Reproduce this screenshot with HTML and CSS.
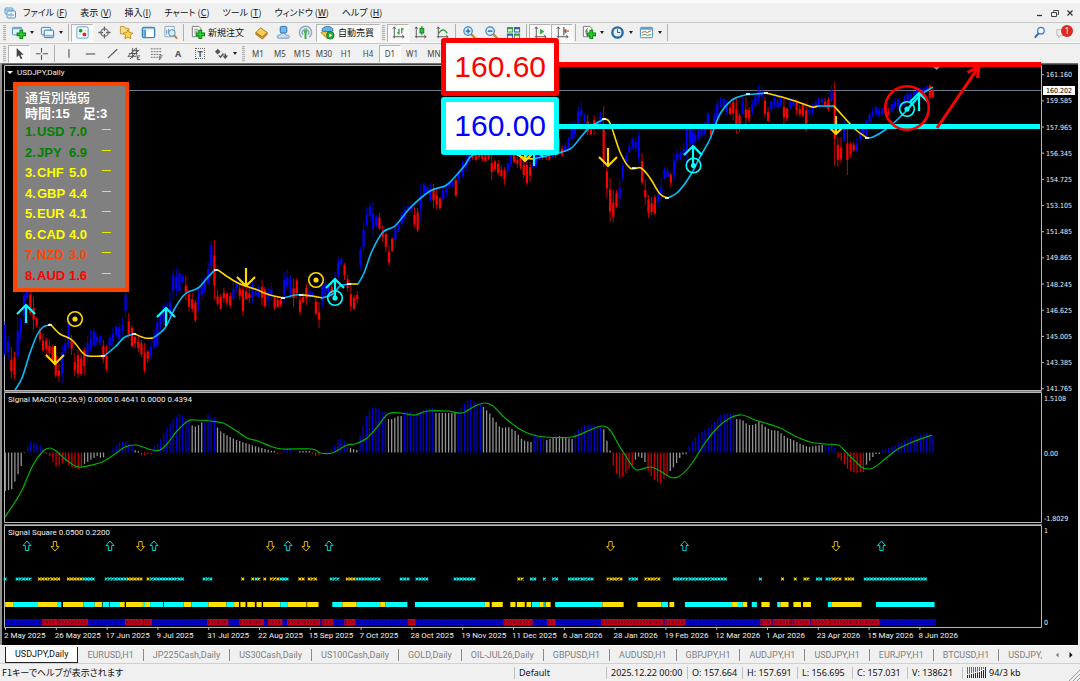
FILE: index.html
```html
<!DOCTYPE html>
<html lang="ja">
<head>
<meta charset="utf-8">
<title>USDJPY,Daily</title>
<link rel="stylesheet" href="styles.css">
</head>
<body>
<div class="app">
  <header class="menubar">
    <svg class="app-icon" viewBox="0 0 12 12" aria-hidden="true"><rect x="1" y="1" width="8" height="6" rx="1" fill="#dff0fb" stroke="#5a9fd0"/><path d="M1 3h8" stroke="#5a9fd0"/><rect x="3" y="4" width="8.500" height="7" rx="1" fill="#f4fbff" stroke="#4a94cc"/><path d="M5 9V7m2 2.500V6m2 3V7" stroke="#3c86c4"/></svg>
    <nav class="menu">
      <a href="#">ファイル (<u>F</u>)</a>
      <a href="#">表示 (<u>V</u>)</a>
      <a href="#">挿入(<u>I</u>)</a>
      <a href="#">チャート (<u>C</u>)</a>
      <a href="#">ツール (<u>T</u>)</a>
      <a href="#">ウィンドウ (<u>W</u>)</a>
      <a href="#">ヘルプ (<u>H</u>)</a>
    </nav>
    <div class="window-controls">
      <button type="button" aria-label="最小化"><svg viewBox="0 0 8 8"><path d="M1 6.500h5" stroke="#333" stroke-width="1.300"/></svg></button>
      <button type="button" aria-label="元に戻す"><svg viewBox="0 0 8 8"><path d="M2.500 2.500v-1h5v4h-1M.5 3.500h5v4h-5z" fill="none" stroke="#444"/></svg></button>
      <button type="button" aria-label="閉じる"><svg viewBox="0 0 8 8"><path d="M1.500 1.500l5 5m0-5l-5 5" stroke="#333" stroke-width="1.200"/></svg></button>
    </div>
  </header>

  <div class="toolbar standard">
    <span class="grip"></span>
    <button type="button" class="tool drop" aria-label="新規チャート"><svg viewBox="0 0 16 16"><rect x="1.500" y="2.500" width="10" height="8" rx="1" fill="#e4f2fb" stroke="#4c8fc0"/><path d="M2 4h9" stroke="#4c8fc0"/><path d="M11 5v10M6 10h10" stroke="#0b7a10" stroke-width="4"/><path d="M11 6v8M7 10h8" stroke="#25d02a" stroke-width="2"/></svg></button>
    <button type="button" class="tool drop" aria-label="表示設定"><svg viewBox="0 0 16 16"><rect x="1.500" y="2.500" width="10" height="8" rx="1" fill="#e4f2fb" stroke="#3c7fb5"/><rect x="4.500" y="5.500" width="10" height="8" rx="1" fill="#f2f9fe" stroke="#2c6fa8"/><path d="M5 11.500h9" stroke="#7fb8dc" stroke-width="2"/></svg></button>
    <span class="sep"></span>
    <button type="button" class="tool pressed" aria-label="気配値表示"><svg viewBox="0 0 16 16"><rect x="2" y="2" width="12" height="12" rx="1.500" fill="#fff" stroke="#4e9bd2"/><circle cx="6" cy="6" r="2" fill="#1a9a28"/><circle cx="10" cy="10" r="2" fill="#e02020"/><path d="M4 10h2m4-4h2" stroke="#b8cce0"/></svg></button>
    <button type="button" class="tool" aria-label="データウィンドウ"><svg viewBox="0 0 16 16"><circle cx="8" cy="8" r="4" fill="none" stroke="#666" stroke-width="1.200"/><path d="M8 1.500v5m0 3v5M1.500 8h5m3 0h5" stroke="#666" stroke-width="1.400"/></svg></button>
    <button type="button" class="tool" aria-label="ナビゲーター"><svg viewBox="0 0 16 16"><path d="M1.500 3.500v-2h4l1 2h4v6h-9z" fill="#f8dc86" stroke="#bd963c"/><path d="M9.500 5l1.600 3.200 3.700.4-2.700 2.500.7 3.500-3.300-1.700-3.200 1.700.7-3.500-2.600-2.500 3.600-.4z" fill="#ffd64b" stroke="#c28a1c"/></svg></button>
    <button type="button" class="tool" aria-label="ターミナル"><svg viewBox="0 0 16 16"><rect x="1.500" y="2.500" width="13" height="11" rx="1.500" fill="#fff" stroke="#3a87c2" stroke-width="1.500"/><path d="M2 4h12" stroke="#6aabd8" stroke-width="1"/><path d="M4 5v8" stroke="#5ea2d2" stroke-width="3"/></svg></button>
    <button type="button" class="tool" aria-label="ストラテジーテスター"><svg viewBox="0 0 16 16"><path d="M2 1.500h10v11H2z" fill="#eef5fa" stroke="#8aa9c0"/><path d="M4 10V5m2 4V4m2 6V6" stroke="#5a8db4"/><circle cx="9.500" cy="8.500" r="3.500" fill="#d4ecfa" stroke="#5589ad"/><path d="M12 11l3 3.500" stroke="#b8862c" stroke-width="2"/></svg></button>
    <span class="sep"></span>
    <button type="button" class="tool text"><svg viewBox="0 0 16 16"><path d="M2.500 1.500h7l2 2v9h-9z" fill="#fff" stroke="#777"/><path d="M4.500 4.500h4m-4 2h5m-5 2h3" stroke="#888"/><path d="M11 5v10M6 10h10" stroke="#0b7a10" stroke-width="4"/><path d="M11 6v8M7 10h8" stroke="#25d02a" stroke-width="2"/></svg>新規注文</button>
    <button type="button" class="tool" aria-label="メタエディター"><svg viewBox="0 0 16 16"><path d="M2 8l5-5 7 5-5 5z" fill="#f7cf54" stroke="#a8761a"/><path d="M2 8v2l7 5 5-5V8l-5 5z" fill="#d89b26" stroke="#a8761a"/></svg></button>
    <button type="button" class="tool" aria-label="コミュニティ"><svg viewBox="0 0 16 16"><rect x="4.500" y="1.500" width="7" height="7" rx="1.500" fill="#6fb8f0" stroke="#2268b0"/><path d="M3 14c-3 0-2-4 1-3 1-3 6-3 7 0 4-1 4 3 2 3z" fill="#c9dff0" stroke="#6a90b4"/></svg></button>
    <button type="button" class="tool" aria-label="シグナル"><svg viewBox="0 0 16 16"><path d="M4 13a6.500 6.500 0 1 1 8 0M5.500 10.500a3.500 3.500 0 1 1 5 0" fill="none" stroke="#8cabc0" stroke-width="1.500"/><path d="M8 7v8" stroke="#35a845" stroke-width="2"/><circle cx="8" cy="7" r="2" fill="#48b557"/></svg></button>
    <button type="button" class="tool text pressed"><svg viewBox="0 0 16 16"><path d="M1 8l7-3 6 4-6 6z" fill="#f0c243" stroke="#b58722"/><path d="M2 6c0-6 12-6 12 0l-2 1H4z" fill="#65b3e4" stroke="#2f78ac"/><circle cx="11" cy="11" r="4" fill="#28ae35" stroke="#117a1e"/><path d="M10 9l3 2-3 2z" fill="#fff"/></svg>自動売買</button>
    <span class="grip"></span>
    <button type="button" class="tool pressed" aria-label="バーチャート"><svg viewBox="0 0 16 16"><path d="M3.500 2v12M2 12.500h12M2 4l1.500-2L5 4m7 7l2 1.500-2 1.500" fill="none" stroke="#555"/><path d="M8.500 4v6M11.500 3v6M8.500 8.500h-2M11.500 4.500h2" stroke="#1c9a2d" stroke-width="1.300"/></svg></button>
    <button type="button" class="tool" aria-label="ローソク足"><svg viewBox="0 0 16 16"><path d="M3.500 2v12M2 12.500h12M2 4l1.500-2L5 4m7 7l2 1.500-2 1.500" fill="none" stroke="#555"/><path d="M9.500 1v10" stroke="#117a1e"/><rect x="7.500" y="3.500" width="4" height="5" fill="#28c438" stroke="#117a1e"/></svg></button>
    <button type="button" class="tool" aria-label="ラインチャート"><svg viewBox="0 0 16 16"><path d="M3.500 2v12M2 12.500h12M2 4l1.500-2L5 4m7 7l2 1.500-2 1.500" fill="none" stroke="#555"/><path d="M4 9c3-5 6-5 9 0" fill="none" stroke="#1c9a2d" stroke-width="1.300"/></svg></button>
    <span class="sep"></span>
    <button type="button" class="tool" aria-label="ズームイン"><svg viewBox="0 0 16 16"><path d="M9 9l5.500 5.500" stroke="#c3922f" stroke-width="2.500"/><circle cx="6.500" cy="6.500" r="4.500" fill="#d7edfb" stroke="#3c84c0" stroke-width="1.300"/><path d="M6.500 4v5M4 6.500h5" stroke="#2568a8" stroke-width="1.500"/></svg></button>
    <button type="button" class="tool" aria-label="ズームアウト"><svg viewBox="0 0 16 16"><path d="M9 9l5.500 5.500" stroke="#c3922f" stroke-width="2.500"/><circle cx="6.500" cy="6.500" r="4.500" fill="#d7edfb" stroke="#3c84c0" stroke-width="1.300"/><path d="M4 6.500h5" stroke="#2568a8" stroke-width="1.500"/></svg></button>
    <button type="button" class="tool" aria-label="チャートの整列"><svg viewBox="0 0 16 16"><path d="M1 2h6.500v6H1zM8.500 9H15v6H8.500z" fill="#3f9d3a"/><path d="M8.500 2H15v6H8.500zM1 9h6.500v6H1z" fill="#2d62b8"/><path d="M2 4.500h4.500V7H2zM9.500 4.500H14V7H9.500zM2 11.500h4.500V14H2zM9.500 11.500H14V14H9.500z" fill="#e0eee4"/></svg></button>
    <span class="sep"></span>
    <button type="button" class="tool pressed" aria-label="自動スクロール"><svg viewBox="0 0 16 16"><path d="M3.500 2v12M2 12.500h12M2 4l1.500-2L5 4m7 7l2 1.500-2 1.500" fill="none" stroke="#555"/><path d="M7.500 4l4.500 3-4.500 3z" fill="#28ae35"/></svg></button>
    <button type="button" class="tool pressed" aria-label="チャートシフト"><svg viewBox="0 0 16 16"><path d="M3.500 2v12M2 12.500h12M2 4l1.500-2L5 4m7 7l2 1.500-2 1.500" fill="none" stroke="#555"/><path d="M9.500 2v9" stroke="#2c68a0" stroke-width="1.300"/><path d="M10 6.500h5M12 4.500L10 6.500l2 2" fill="none" stroke="#c25a20" stroke-width="1.300"/></svg></button>
    <span class="sep"></span>
    <button type="button" class="tool drop" aria-label="インディケータ"><svg viewBox="0 0 16 16"><path d="M2.500 1.500h7l2 2v9h-9z" fill="#fff" stroke="#777"/><path d="M7.500 4c-2 0-2 1-2 6m-1-3.500h3" fill="none" stroke="#555"/><path d="M11 5v10M6 10h10" stroke="#0b7a10" stroke-width="4"/><path d="M11 6v8M7 10h8" stroke="#25d02a" stroke-width="2"/></svg></button>
    <button type="button" class="tool drop" aria-label="時間足設定"><svg viewBox="0 0 16 16"><circle cx="8" cy="8" r="5.500" fill="#e4f2fb" stroke="#2868ac" stroke-width="2.500"/><path d="M8 4.500V8h3" fill="none" stroke="#444"/></svg></button>
    <button type="button" class="tool drop" aria-label="定型チャート"><svg viewBox="0 0 16 16"><rect x="1.500" y="2.500" width="13" height="11" rx="1" fill="#fff" stroke="#4384b8"/><path d="M2 4h12" stroke="#5a9cd0" stroke-width="2"/><path d="M3 8l3-1 3 1 4-2" fill="none" stroke="#a34d3c"/><path d="M3 11l3-1 3 1 4-1" fill="none" stroke="#3a9444"/></svg></button>
    <span class="sep"></span>
    <div class="right">
      <button type="button" class="tool" aria-label="検索"><svg viewBox="0 0 16 16"><path d="M7 9l-4 4.500" stroke="#2a63b8" stroke-width="2"/><circle cx="9.500" cy="6" r="3.500" fill="#f4faff" stroke="#2f78d0" stroke-width="1.300"/></svg></button>
      <button type="button" class="tool chat" aria-label="メッセージ"><svg viewBox="0 0 16 16"><path d="M3 5h9v6H7l-2 3v-3H3z" fill="#eee" stroke="#bbb"/></svg><span class="badge">1</span></button>
    </div>
  </div>

  <div class="toolbar line-studies">
    <span class="grip"></span>
    <button type="button" class="tool pressed" aria-label="カーソル"><svg viewBox="0 0 16 16"><path d="M5 2v10l2.500-2.200L9.300 14l1.700-.8L9.200 9.300h3.300z" fill="#444"/></svg></button>
    <button type="button" class="tool" aria-label="十字カーソル"><svg viewBox="0 0 16 16"><path d="M8 2v5m0 2.500V15M2 8.200h5m2.500 0H15" stroke="#555" stroke-width="1.200"/></svg></button>
    <span class="sep"></span>
    <button type="button" class="tool" aria-label="垂直線"><svg viewBox="0 0 16 16"><path d="M8.500 3.500v9" stroke="#555" stroke-width="1.200"/></svg></button>
    <button type="button" class="tool" aria-label="水平線"><svg viewBox="0 0 16 16"><path d="M3 8.500h10" stroke="#555" stroke-width="1.200"/></svg></button>
    <button type="button" class="tool" aria-label="トレンドライン"><svg viewBox="0 0 16 16"><path d="M3 13L13 3.500" stroke="#555" stroke-width="1.200"/></svg></button>
    <button type="button" class="tool" aria-label="チャネル"><svg viewBox="0 0 16 16"><path d="M1 11l9-9M3 14l10-10M2 8h9M1 11h9M5 5h8M6 2v11M10 2v8" stroke="#555"/><path d="M14 10.500h-3v4h3m-3-2h2" fill="none" stroke="#555"/></svg></button>
    <button type="button" class="tool" aria-label="フィボナッチ"><svg viewBox="0 0 16 16"><path d="M2 3h12M2 6h12M2 9h12M2 12h8" stroke="#666" stroke-dasharray="2 1"/><path d="M11.500 15v-4.500h3m-3 2h2" fill="none" stroke="#555"/></svg></button>
    <button type="button" class="tool glyph">A</button>
    <button type="button" class="tool glyph" aria-label="テキストラベル"><span class="dotted">T</span></button>
    <button type="button" class="tool drop" aria-label="矢印"><svg viewBox="0 0 16 16"><path d="M1 6l3-3 3 3-3 3z" fill="#555"/><path d="M9 10h6l-3 4z" fill="#555"/><path d="M12 8v3M5 10l2 2 3-4" fill="none" stroke="#555" stroke-width="1.500"/></svg></button>
    <span class="grip"></span>
    <button type="button" class="tool period">M1</button>
    <button type="button" class="tool period">M5</button>
    <button type="button" class="tool period">M15</button>
    <button type="button" class="tool period">M30</button>
    <button type="button" class="tool period">H1</button>
    <button type="button" class="tool period">H4</button>
    <button type="button" class="tool period pressed">D1</button>
    <button type="button" class="tool period">W1</button>
    <button type="button" class="tool period">MN</button>
  </div>

  <main class="chart-window">
    <section class="pane price-pane">
      <svg id="price" viewBox="2 63 1076 328" role="img" aria-label="USDJPY,Daily"></svg>
      <aside class="strength">
        <h2>通貨別強弱</h2>
        <p>時間:15　足:3</p>
        <ol>
          <li class="up"><span>1.</span><span>USD</span><span>7.0</span><i></i></li>
          <li class="up"><span>2.</span><span>JPY</span><span>6.9</span><i></i></li>
          <li><span>3.</span><span>CHF</span><span>5.0</span><i></i></li>
          <li><span>4.</span><span>GBP</span><span>4.4</span><i></i></li>
          <li><span>5.</span><span>EUR</span><span>4.1</span><i></i></li>
          <li><span>6.</span><span>CAD</span><span>4.0</span><i></i></li>
          <li class="weak"><span>7.</span><span>NZD</span><span>3.0</span><i></i></li>
          <li class="down"><span>8.</span><span>AUD</span><span>1.6</span><i></i></li>
        </ol>
      </aside>
      <div class="targets">
        <strong class="target high">160.60</strong>
        <strong class="target low">160.00</strong>
      </div>
    </section>
    <section class="pane">
      <svg id="macd" viewBox="2 391 1076 133" role="img" aria-label="Signal MACD"></svg>
    </section>
    <section class="pane">
      <svg id="square" viewBox="2 524 1076 121" role="img" aria-label="Signal Square"></svg>
    </section>
  </main>

  <nav class="tabs">
    <a href="#" class="active">USDJPY,Daily</a>
    <a href="#">EURUSD,H1</a>
    <a href="#">JP225Cash,Daily</a>
    <a href="#">US30Cash,Daily</a>
    <a href="#">US100Cash,Daily</a>
    <a href="#">GOLD,Daily</a>
    <a href="#">OIL-JUL26,Daily</a>
    <a href="#">GBPUSD,H1</a>
    <a href="#">AUDUSD,H1</a>
    <a href="#">GBPJPY,H1</a>
    <a href="#">AUDJPY,H1</a>
    <a href="#">USDJPY,H1</a>
    <a href="#">EURJPY,H1</a>
    <a href="#">BTCUSD,H1</a>
    <a href="#">USDJPY,</a>
    <span class="scroll">
      <button type="button" aria-label="前へ" disabled><svg viewBox="0 0 6 8"><path d="M4.500 1.500v5L2 4z" fill="#777"/></svg></button>
      <button type="button" aria-label="次へ"><svg viewBox="0 0 6 8"><path d="M1.500 1v6l3-3z" fill="#111"/></svg></button>
    </span>
  </nav>

  <footer class="statusbar">
    <span class="help">F1キーでヘルプが表示されます</span>
    <span class="profile">Default</span>
    <span class="time">2025.12.22 00:00</span>
    <span class="ohlc">O: 157.664</span>
    <span class="ohlc">H: 157.691</span>
    <span class="ohlc">L: 156.695</span>
    <span class="ohlc">C: 157.031</span>
    <span class="ohlc">V: 138621</span>
    <span class="traffic"><svg viewBox="0 0 20 11" aria-hidden="true"><path d="M.5 0v7M2.500 0v6.500M4.500 0v6M6.500 0v5.500M8.500 0v5M10.500 0v4.500M12.500 0v4M14.500 0v3M16.500 0v2" stroke="#4f8a10"/><path d="M.5 8v3M2.500 7.500V11M4.500 7v4M6.500 6.500V11M8.500 6v5M10.500 5.500V11M12.500 5v6M14.500 4v7M16.500 3v8M18.500 0v11" stroke="#0c2c54"/></svg>94/3 kb</span>
    <svg class="resize" viewBox="0 0 12 12" aria-hidden="true"><path d="M1 12L12 1M5 12l7-7M9 12l3-3" stroke="#999"/></svg>
  </footer>
</div>
<script src="chart.js"></script>
</body>
</html>
```

FILE: styles.css
```css
* { box-sizing: border-box; }

body {
  margin: 0;
  background: #f0f0f0;
  color: #111;
  font: 9px/12px "Noto Sans", "Noto Sans CJK JP", sans-serif;
}

button {
  padding: 0;
  border: 0;
  background: none;
  color: inherit;
  font: inherit;
}

a { color: inherit; text-decoration: none; }

.app {
  display: flex;
  flex-direction: column;
  min-height: 100vh;
  overflow: hidden;
}

/* Menu bar */
.menubar {
  display: flex;
  align-items: center;
  height: 22px;
  padding: 0 6px 0 4px;
  border-top: 3px solid #fafafa;
}
.app-icon { width: 12px; height: 12px; margin-right: 7px; }
.menu {
  display: flex;
  gap: 13px;
  font-family: "Noto Sans CJK JP", sans-serif;
  font-feature-settings: "palt";
  white-space: nowrap;
}
.window-controls { display: flex; gap: 7px; margin-left: auto; }
.window-controls button { display: flex; }
.window-controls svg { width: 8px; height: 8px; }

/* Toolbars */
.toolbar {
  display: flex;
  align-items: center;
  height: 21px;
  padding-left: 1px;
  border-top: 1px solid #c8c8c8;
  border-bottom: 1px solid #fafafa;
}
.line-studies { height: 20px; border-bottom: 0; }
.grip {
  width: 3px;
  height: 16px;
  margin: 0 2px;
  background: repeating-linear-gradient(#b4b4b4 0 1px, #e4e4e4 1px 2px);
}
.sep { width: 1px; height: 17px; margin: 0 2px; background: #b0b0b0; }
.tool {
  position: relative;
  display: flex;
  flex: none;
  align-items: center;
  justify-content: center;
  width: 22px;
  height: 18px;
  border: 1px solid transparent;
}
.tool svg { width: 15px; height: 15px; }
.drop { width: 29px; justify-content: flex-start; padding-left: 2px; }
.drop::after {
  margin-left: 4px;
  border: 2px solid transparent;
  border-top: 3px solid #222;
  border-bottom: 0;
  content: "";
}
.text {
  gap: 3px;
  width: auto;
  padding: 0 5px 0 3px;
  font-family: "Noto Sans CJK JP", sans-serif;
}
.pressed {
  border-color: #b4b4b4 #fff #fff #b4b4b4;
  background: #f8f8f8;
}
.glyph { color: #555; font: bold 9px/12px "Noto Sans", sans-serif; }
.dotted { width: 10px; border: 1px dotted #666; line-height: 9px; }
.period { color: #444; font-size: 8px; }
.right { display: flex; margin-left: auto; padding-right: 8px; }
.badge {
  position: absolute;
  top: 0;
  right: -2px;
  width: 12px;
  border-radius: 6px;
  background: #dc2a1e;
  color: #fff;
  font-size: 8px;
  line-height: 12px;
  text-align: center;
}

/* Chart window */
.chart-window {
  margin-right: 2px;
  border-left: 2px solid #909090;
  background: #000;
}
.pane { position: relative; }
.pane > svg { display: block; width: 100%; overflow: visible; }
.pane text {
  fill: #f0f0f0;
  font: 8px Roboto, sans-serif;
}
.pane .scale { font: 7px "DejaVu Sans Condensed", "DejaVu Sans", sans-serif; }
.pane .current { fill: #000; }
.price-pane { z-index: 1; }

.strength {
  position: absolute;
  top: 19px;
  left: 11px;
  width: 116px;
  padding: 4px 8px 2px;
  border: 4px solid #ff4500;
  background: #808080;
  color: #fff;
  font: bold 13px/16px "Liberation Sans", "Noto Sans CJK JP", sans-serif;
}
.strength h2, .strength p { margin: 0; font: inherit; }
.strength h2 { font-weight: 500; }
.strength ol {
  display: grid;
  grid-template-rows: repeat(8, 1fr);
  height: 164px;
  margin: 0;
  padding: 0;
  color: #ff0;
  list-style: none;
}
.strength li {
  display: grid;
  grid-template-columns: 12px 32px 33px 9px;
  align-items: center;
}
.strength i { height: 1px; margin-bottom: 5px; background: #e8e800; }
.strength .up { color: #008000; }
.strength .weak { color: #ff4500; }
.strength .down { color: #f00; }

.targets {
  position: absolute;
  top: -25px;
  left: 41%;
  display: grid;
  gap: 1px;
  width: 118px;
  margin-left: -2px;
}
.target {
  border: 5px solid;
  border-radius: 3px;
  background: #fff;
  font: 30px/48px "Liberation Sans", sans-serif;
  text-align: center;
}
.high { border-color: #f00; color: #f00; }
.low { border-color: #0ff; color: #00f; }

/* Chart tabs */
.tabs {
  display: flex;
  align-items: center;
  height: 18px;
  padding-left: 5px;
  border-top: 1px solid #fff;
  color: #808080;
  font-family: Roboto, sans-serif;
  white-space: nowrap;
}
.tabs a { padding: 0 9px; border-right: 1px solid #888; }
.tabs a:nth-last-of-type(1) { padding-right: 4px; border: 0; }
.tabs .active {
  padding: 1px 9px 2px;
  border: 1px solid #222;
  border-top: 0;
  background: #fff;
  color: #111;
}
.scroll { display: flex; gap: 8px; margin-left: auto; padding-right: 6px; }
.scroll button { display: flex; }
.scroll svg { width: 6px; height: 8px; }

/* Status bar */
.statusbar {
  display: flex;
  flex: 1;
  align-items: center;
  min-height: 18px;
  border-top: 1px solid #d0d0d0;
  white-space: nowrap;
}
.statusbar > span { padding-left: 4px; border-left: 1px solid #c0c0c0; }
.statusbar .help {
  flex: 1;
  padding-left: 2px;
  border: 0;
  font-family: "Noto Sans CJK JP", sans-serif;
  font-feature-settings: "palt";
}
.profile { width: 92px; }
.time { width: 81px; }
.ohlc { width: 55px; }
.traffic { display: flex; gap: 2px; width: 106px; }
.traffic svg { width: 20px; height: 11px; }
.resize { align-self: flex-end; width: 12px; height: 12px; }
```

FILE: chart.js
```js
const NS = 'http://www.w3.org/2000/svg';
const STEP = 3.166;
const COLORS = { b: '#0000ff', r: '#ff0000', c: '#00bfff', y: '#ffd700', g: '#8c8c8c', w: '#ffffff' };

function add(parent, name, attrs, text) {
  const node = document.createElementNS(NS, name);
  for (const key in attrs) node.setAttribute(key, attrs[key]);
  if (text !== undefined) node.textContent = text;
  parent.appendChild(node);
  return node;
}

function line(parent, d, stroke, width = 1) {
  return add(parent, 'path', { d, stroke, 'stroke-width': width, fill: 'none' });
}

function smooth(points) {
  let d = `M${points[0]}`;
  for (let i = 0; i < points.length - 1; i++) {
    const a = points[i - 1] || points[i], b = points[i], c = points[i + 1], e = points[i + 2] || c;
    d += `C${b[0] + (c[0] - a[0]) / 6} ${b[1] + (c[1] - a[1]) / 6} ${c[0] - (e[0] - b[0]) / 6} ${c[1] - (e[1] - b[1]) / 6} ${c}`;
  }
  return d;
}

const parse = s => s.trim().split(/\s+/).map(p => p.split(',').map(Number));

/* Candles: colour, high, low for each bar between two horizontal ends. */
const candles = [
  [5, 262, `b321,357 b335,360 r347,379 r352,379 b317,360 b317,342 b285,325 b286,300 r290,315 r297,330 r317,328 r327,342 r333,352 r337,355 r340,357 r345,363 r347,378 r363,382 b345,383 b338,355 b315,348 r335,355 r353,376 r350,378 r350,376 r347,375 b336,363 b330,352 b328,347 b333,345 b335,345 r340,363 r345,371 b335,350 b328,345 b325,337 b323,340 b318,335 b289,318 r313,338 r325,348 r333,348 r335,352 r340,357 r343,373 r350,363 b342,360 b330,350 b316,348 b312,330 b303,328 b302,322 b292,318 b270,300 b268,296 b270,295 b274,283 r276,300 r290,312 r293,312 r300,322 b287,312 b278,300 b276,293 b262,285 b241,278 r240,300 r290,306 r294,310 r288,303 r292,306 r292,308 b282,300 b280,292 r283,300 r286,316 r288,300 r287,303 b280,303 b288,297 b285,298 r280,306`],
  [265, 459, `r287,308 b288,305 b283,300 r295,310 r296,308 r298,308 b272,303 b269,290 b275,295 r279,307 r278,298 r295,315 r293,303 r284,305 b285,302 b292,298 r297,315 r302,328 b280,308 b277,298 b283,297 r283,297 b272,297 b257,280 b256,265 r263,280 r275,292 r283,311 r295,310 r291,303 b247,270 b222,252 b207,227 b203,222 b202,237 b215,228 r213,230 r225,242 r230,252 r245,266 r237,252 b222,248 b222,232 b210,227 b205,220 b206,212 b203,213 r207,227 r208,232 b183,221 b183,197 b185,193 b183,202 r184,208 r188,210 r197,210 b187,200 b183,197 b180,190 b180,187 r178,197 b170,184`],
  [463, 690, `b160,178 b155,172 b150,165 r146,160 r148,161 r150,160 r150,162 r150,163 r148,160 r155,180 r160,172 r160,175 r165,177 r167,185 b158,175 b152,167 r150,163 r155,168 r155,170 r158,178 r162,185 r162,182 b158,170 b150,167 b150,160 r150,160 r153,160 r150,161 b146,158 r148,158 r137,155 r146,157 b142,152 b137,150 b122,145 b122,137 b106,125 b102,122 b113,123 r115,135 r123,135 r115,135 b117,130 b112,125 r106,167 r168,198 r178,222 r190,222 r190,208 b178,208 b163,182 b152,168 b142,153 b137,150 b137,152 b132,163 r153,185 r180,205 r195,218 r197,215 r195,215 b190,207 b177,202 b167,180 b167,178 r173,187 b153,182 b147,163 b152,160 b143,160 b125,162 b123,147`],
  [692, 933, `b130,145 b130,147 b124,141 b128,138 b122,135 b112,130 r125,138 b110,125 b100,120 b97,107 b98,108 b100,115 r103,115 r98,120 r97,134 r113,132 b98,115 r97,128 r107,123 b99,115 b95,107 b86,104 b86,100 r97,117 r107,122 b100,113 b95,108 b95,110 b94,107 r97,127 r107,122 b98,110 b97,107 r100,115 r105,117 r103,118 r103,132 b105,117 b103,115 b100,108 b97,107 b97,105 r98,107 r97,112 b85,102 r82,166 r137,167 r137,163 b120,142 r128,175 r142,158 r142,152 b138,152 b130,143 b123,137 b120,138 b112,123 b108,118 b105,117 b107,117 b108,115 r103,113 r108,116 b102,113 b98,108 b98,110 b102,107 b95,105 b92,102 b92,100 b91,97 b88,95 b88,95 b87,93 b85,92 r84,100 r88,98`]
];

/* Moving average, one run for each colour. */
const average = [
  ['c', '15,390 22,378 30,353 37,335 43,327 49,325'],
  ['y', '49,325 51,325 60,334 72,340 82,352 88,356 104,356'],
  ['c', '104,356 115,347 125,337 135,334'],
  ['y', '135,334 145,338 153,338'],
  ['c', '153,338 165,328 175,308 185,294 198,288 207,278 214,271 218,270'],
  ['y', '218,270 228,277 240,284 255,289 270,295 284,298'],
  ['c', '284,298 295,295 302,295'],
  ['y', '302,295 312,296 322,298'],
  ['c', '322,298 333,294 340,286 349,284'],
  ['y', '349,284 358,284'],
  ['c', '358,284 364,273 372,251 383,232 395,226 410,208 430,191 445,186 453,179 465,165 473,155 500,148'],
  ['y', '515,154 525,158 533,159'],
  ['c', '533,159 550,155 570,149 580,138 590,127 604,119'],
  ['y', '604,119 610,123 620,152 630,168 641,168 650,178 660,194 668,198'],
  ['c', '668,198 678,192 690,176 700,157 710,139 720,114 732,100 745,95 755,94 766,93'],
  ['y', '766,93 782,97 798,102 812,107 818,106'],
  ['c', '818,106 834,106'],
  ['y', '834,106 843,116 855,129 867,138'],
  ['c', '867,138 873,137 885,130 898,119 910,107 922,94 933,87']
];

const histogram = [
  ['g', '5,491 12,489 15,480 20,469 22,462 24,453'],
  ['b', '27,447 30,442 37,443 40,445 45,451'],
  ['r', '47,454 50,457 55,467 60,465 65,461 70,467 78,469 82,466'],
  ['g', '84,464 90,460 97,456 102,459 104,456'],
  ['b', '110,451 120,441 127,442 130,446'],
  ['g', '133,449 136,451'],
  ['r', '139,454 142,456 148,454'],
  ['b', '152,448 158,443 165,430 172,420 180,413 186,419'],
  ['g', '190,425 196,427 202,422'],
  ['b', '205,420 208,413 211,418'],
  ['g', '215,425 220,431 228,436 236,440 245,443 254,446 265,449 272,451'],
  ['r', '277,454 280,453'],
  ['b', '284,449 287,448 292,449'],
  ['g', '298,451 308,451'],
  ['r', '312,454 317,457 319,454'],
  ['b', '328,452 333,448 338,438 343,439 346,445'],
  ['g', '350,448 355,450'],
  ['b', '358,440 363,425 367,413 373,407 377,407 382,412'],
  ['g', '386,418 390,420 398,416'],
  ['b', '402,413 408,411 414,414 425,409 431,408'],
  ['g', '434,413 454,413'],
  ['b', '457,413 462,406 467,400 472,400 479,404'],
  ['g', '482,406 490,414 500,428 508,427 515,431 522,440 529,442'],
  ['b', '534,435 545,438'],
  ['g', '547,440 558,436 571,439'],
  ['b', '573,435 580,427 588,424 600,427'],
  ['g', '603,428 606,438 608,448 610,451'],
  ['r', '612,463 615,472 620,479 625,474 631,465'],
  ['g', '634,461 637,457 640,456 644,462'],
  ['r', '646,468 652,478 660,484 664,478 667,475'],
  ['g', '670,471 675,465 680,457 683,454'],
  ['b', '688,447 695,437 705,429 712,424 720,415 727,413 733,414'],
  ['g', '736,419 742,420 748,425 754,425 758,421 765,427 770,430 778,431 785,437 793,440 800,444 808,447 820,445'],
  ['b', '823,445 829,445 831,441 833,448'],
  ['r', '837,457 843,463 848,470 855,473 862,472'],
  ['g', '865,466 870,460 875,454'],
  ['b', '880,451 890,447 900,443 910,437 918,435 926,433 933,435']
];

const signal = '5,517 15,502 22,490 33,465 43,451 50,448 56,451 65,459 75,466 82,467 92,465 102,462 112,456 125,447 135,445 143,447 152,450 160,450 167,444 177,431 188,421 195,420 210,421 223,423 235,430 247,438 258,441 270,446 282,449 312,449 320,453 332,453 347,445 355,444 367,438 378,426 388,414 400,413 415,415 427,411 447,411 462,413 475,406 485,403 493,406 505,418 518,428 530,434 545,437 572,437 590,430 602,426 610,430 620,447 633,467 638,470 650,467 660,471 670,477 678,477 690,466 705,443 718,427 730,418 742,415 755,420 765,423 780,428 795,436 810,442 825,444 838,445 845,451 855,461 863,468 873,468 885,459 898,449 915,441 932,435';

/* Square panel: runs in units of 1/2.904 px. */
const UNIT = 2.904;
const HALF = 1568;
const crosses = [
  [0, 'c12-18 c45-92 y110-175 y194-240 c240-275 c304-368 y368-414 y424-436 c436-534 c588-617 y700-710 y728-740 c740-748 y748-756 y764-774 y783-812 c812-838 y866-885 y893-921 c957-986 y1004-1032 c1032-1105 c1160-1190 c1206-1244 c1317-1381 y1502-1521 c1538-1558'],
  [HALF, 'c8-18 c35-53 c81-156 y193-240 c257-285 y303-350 c386-543 c635-645 y700-709 y737-746 y765-783 c801-820 c829-848 y848-876 y884-913 c940-1124']
];
const bars = [
  [0, 'y15-40 c40-108 y108-168 c168-178 y183-242 c242-275 y275-296 c298-317 c319-346 y346-362 y366-415 c415-421 y421-436 c436-474 c476-533 y533-556 c556-605 y605-658 c658-680 y680-694 y698-713 y718-740 y745-760 y764-814 c814-836 y836-890 y892-925 c965-994 y994-1036 c1036-1104 y1104-1119 c1119-1183 c1205-1408 y1408-1422 y1428-1460 y1482-1497 y1501-1524 y1529-1542 c1544-1568'],
  [HALF, 'y0-11 c11-14 y16-31 c44-181 y181-243 y283-353 c353-372 y376-390 c421-558 y558-575 c575-589 y589-602 c615-630 y643-667 c689-698 y698-722 y736-758 y764-787 c836-846 y846-934 c976-1146']
];
const downtrend = [
  [0, 'r122-166 r169-256 r363-415 r418-441 r602-663 r695-766 r778-820 r834-930 r936-967 r1000-1032 r1184-1206 r1462-1547'],
  [HALF, 'r21-45 r178-358 r362-422 r640-672 r676-730 r733-785 r788-840 r842-985']
];

function runs(groups) {
  const out = [];
  for (const [offset, text] of groups) {
    for (const item of text.split(' ')) {
      const [a, b] = item.slice(1).split('-').map(Number);
      out.push([item[0], (a + offset) / UNIT, (b + offset) / UNIT]);
    }
  }
  return out;
}

function drawFrame(svg, top, bottom) {
  line(svg, `M4.500 ${top}V${bottom}H1041.500V${top}Z`, '#b8b8b8');
}

function drawPrice() {
  const svg = document.getElementById('price');
  add(svg, 'path', { d: 'M2 63h1076v1.500H2z', fill: '#707070' });
  drawFrame(svg, 65.5, 390.5);
  line(svg, 'M5 90.500H1041', '#6c7c8c');

  for (const [from, to, text] of candles) {
    const list = text.trim().split(/\s+/);
    const step = (to - from) / (list.length - 1);
    list.forEach((item, i) => {
      const [high, low] = item.slice(1).split(',').map(Number);
      const x = from + i * step, h = low - high, color = COLORS[item[0]];
      const upper = high + h * (0.12 + (i * 7 % 5) * 0.07);
      const lower = low - h * (0.08 + (i * 11 % 4) * 0.08);
      line(svg, `M${x} ${high}V${low}`, color, 0.8);
      line(svg, `M${x} ${upper}V${lower}`, color, 2.2);
    });
  }

  average.forEach(([color, text]) => line(svg, smooth(parse(text)), COLORS[color], 1.6));
  [[50, 325], [103, 356], [134, 334], [216, 270], [283, 298], [301, 295], [349, 284], [604, 119], [634, 168], [667, 198], [748, 94], [766, 93], [867, 138]]
    .forEach(([x, y]) => line(svg, `M${x - 2} ${y}h4`, '#fff', 1.6));

  const up = (x, y) => line(svg, `M${x} ${y + 19}V${y + 1}M${x - 9} ${y + 10}L${x} ${y + 1}L${x + 9} ${y + 10}`, '#00ffff', 2.2);
  const down = (x, y) => line(svg, `M${x} ${y - 19}V${y - 1}M${x - 9} ${y - 10}L${x} ${y - 1}L${x + 9} ${y - 10}`, '#ffd700', 2.2);
  const ring = (x, y, color) => {
    add(svg, 'circle', { cx: x, cy: y, r: 7.3, fill: 'none', stroke: color, 'stroke-width': 1.6 });
    add(svg, 'circle', { cx: x, cy: y, r: 2.6, fill: color });
  };
  [[26, 304], [166, 307], [335, 278], [534, 147], [693, 145], [919, 92]].forEach(p => up(...p));
  [[55, 365], [246, 287], [525, 162], [608, 167]].forEach(p => down(...p));
  ring(75, 319, '#ffd700');
  ring(316, 280, '#ffd700');
  ring(335, 298, '#00ffff');
  ring(693.5, 165.5, '#00ffff');
  down(836, 135);

  line(svg, 'M540 126.500H1040', '#00ffff', 5);
  line(svg, 'M540 64.500H1041', '#ff0000', 5);
  ring(907, 109, '#00ffff');
  line(svg, 'M907 109L919 96', '#00ffff', 1.6);
  add(svg, 'circle', { cx: 907, cy: 108, r: 21.8, fill: 'none', stroke: '#ff0000', 'stroke-width': 2.6 });
  line(svg, 'M937 128L978.500 67M967.500 72.500L979 66.500L977.500 78', '#ff0000', 3);
  add(svg, 'path', { d: 'M933 67h7l-3.500 3z', fill: '#888' });

  add(svg, 'path', { d: 'M7 71h6l-3 3z', fill: '#fff' });
  add(svg, 'text', { x: 17, y: 75 }, 'USDJPY,Daily');
  ['161.160', '159.585', '157.965', '156.345', '154.725', '153.105', '151.485', '149.865', '148.245', '146.625', '145.005', '143.385', '141.765'].forEach((label, i) => {
    const y = 74.7 + i * 26.17;
    line(svg, `M1042 ${y}h2`, '#b8b8b8');
    add(svg, 'text', { x: 1046, y: y + 2.6, class: 'scale' }, label);
  });
  add(svg, 'rect', { x: 1043, y: 86, width: 32, height: 9, fill: '#fff' });
  add(svg, 'text', { x: 1046, y: 93, class: 'scale current' }, '160.202');
}

function drawMacd() {
  const svg = document.getElementById('macd');
  add(svg, 'path', { d: 'M4 391h1038v1H4z', fill: '#808080' });
  drawFrame(svg, 392.5, 522.5);
  const series = histogram.map(([color, text]) => [color, parse(text)]);
  series.forEach(([color, pts], n) => {
    const last = pts[pts.length - 1][0];
    const next = series[n + 1] ? series[n + 1][1][0][0] : Infinity;
    const limit = next - last < 6 ? next - 1 : last + 1;
    const fill = color === 'b' ? '#0000d8' : color === 'r' ? '#d00000' : '#949494';
    for (let i = Math.ceil((pts[0][0] - 6) / STEP); 5 + i * STEP < limit; i++) {
      const x = 5 + i * STEP;
      let k = 0;
      while (k < pts.length - 2 && pts[k + 1][0] < x) k++;
      const [a, b] = [pts[k], pts[k + 1]];
      const t = Math.min(1, Math.max(0, (x - a[0]) / (b[0] - a[0])));
      line(svg, `M${x + 0.4} 452.500V${a[1] + (b[1] - a[1]) * t}`, fill, 1.3);
    }
  });
  line(svg, smooth(parse(signal)), '#00b400', 1.2);
  add(svg, 'text', { x: 8, y: 402 }, 'Signal MACD(12,26,9) 0.0000 0.4641 0.0000 0.4394');
  add(svg, 'text', { x: 1044, y: 401, class: 'scale' }, '1.5108');
  add(svg, 'text', { x: 1044, y: 455.5, class: 'scale' }, '0.00');
  add(svg, 'text', { x: 1044, y: 521, class: 'scale' }, '-1.8029');
}

function drawSquare() {
  const svg = document.getElementById('square');
  add(svg, 'path', { d: 'M4 524h1038v1H4z', fill: '#808080' });
  drawFrame(svg, 525.5, 627.5);

  const outline = (x, sign, color) => line(svg,
    `M${x} ${546 - 5 * sign}l4 ${4.5 * sign}h-2.300v${5 * sign}h-3.400v${-5 * sign}h-2.300z`, color, 1);
  [27, 110, 154, 288, 329, 684.5, 881.5].forEach(x => outline(x, 1, '#00d0d0'));
  [55, 140.5, 270.5, 306, 610.5, 836].forEach(x => outline(x, -1, '#e0b000'));

  for (const [color, from, to] of runs(crosses)) {
    const count = Math.max(1, Math.round((to - from) / STEP));
    const step = (to - from) / count;
    let d = '';
    for (let i = 0; i < count; i++) {
      const x = Math.max(from + (i + 0.5) * step, 5);
      d += `M${x - 1.4} 577.600l2.800 2.800m0-2.800l-2.800 2.800`;
    }
    line(svg, d, color === 'c' ? '#00ffff' : '#ffd700', 1.1);
  }
  for (const [color, from, to] of runs(bars)) {
    add(svg, 'rect', { x: from, y: 602, width: to - from, height: 5, fill: color === 'c' ? '#00ffff' : '#ffe000' });
  }

  const link = (from, to, color, ink) => {
    add(svg, 'rect', { x: from, y: 619, width: to - from, height: 6.5, fill: color });
    let d = '';
    for (let x = from + 1.6; x < to - 1; x += STEP) d += `M${x - 0.9} 620.700l1.800 1.500l-1.800 1.500`;
    line(svg, d, ink, 0.9);
  };
  link(5, 936, '#0000d2', '#000050');
  for (const [, from, to] of runs(downtrend)) link(from, to, '#c80018', '#300030');

  add(svg, 'text', { x: 8, y: 534.5 }, 'Signal Square 0.0500 0.2200');
  add(svg, 'text', { x: 1044, y: 533, class: 'scale' }, '1');
  add(svg, 'text', { x: 1044, y: 625, class: 'scale' }, '0');
  ['2 May 2025', '26 May 2025', '17 Jun 2025', '9 Jul 2025', '31 Jul 2025', '22 Aug 2025', '15 Sep 2025', '7 Oct 2025', '28 Oct 2025', '19 Nov 2025', '11 Dec 2025', '6 Jan 2026', '28 Jan 2026', '19 Feb 2026', '12 Mar 2026', '1 Apr 2026', '23 Apr 2026', '15 May 2026', '8 Jun 2026'].forEach((label, i) => {
    const x = 5 + i * 50.8;
    line(svg, `M${x + 0.5} 627v3`, '#b8b8b8');
    add(svg, 'text', { x: x - 1, y: 638 }, label);
  });
}

drawPrice();
drawMacd();
drawSquare();
```
